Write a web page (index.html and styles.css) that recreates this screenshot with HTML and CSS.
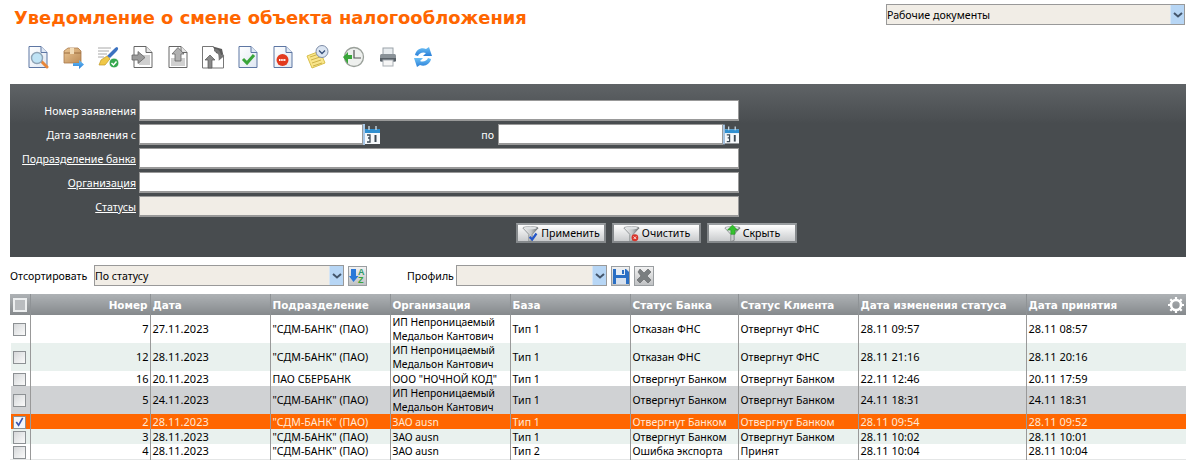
FILE: index.html
```html
<!DOCTYPE html>
<html lang="ru">
<head>
<meta charset="utf-8">
<title>Уведомление о смене объекта налогообложения</title>
<link rel="stylesheet" href="styles.css">
</head>
<body>
<svg class="defs" aria-hidden="true">
  <defs>
    <linearGradient id="gDoc" x1="0" y1="0" x2="1" y2="1"><stop offset="0" stop-color="#fff"/><stop offset="1" stop-color="#dfe7f2"/></linearGradient>
    <linearGradient id="gBlue" x1="0" y1="0" x2="0" y2="1"><stop offset="0" stop-color="#6cc0f5"/><stop offset="1" stop-color="#2a7fd8"/></linearGradient>
    <linearGradient id="gBox" x1="0" y1="0" x2="1" y2="1"><stop offset="0" stop-color="#ecc896"/><stop offset="1" stop-color="#bb8a55"/></linearGradient>
    <linearGradient id="gFunnel" x1="0" y1="0" x2="1" y2="0"><stop offset="0" stop-color="#f6f6f6"/><stop offset=".55" stop-color="#c4c7c9"/><stop offset="1" stop-color="#62676a"/></linearGradient>
    <symbol id="cal" viewBox="0 0 17 21">
      <rect x="0" y="0" width="2" height="21" fill="#a8c8e8"/>
      <rect x="2" y="5" width="15" height="15" fill="#f5f8fb"/>
      <rect x="2" y="5" width="15" height="4" fill="#2f8fd0"/>
      <path d="M6 2v4M13 2v4" stroke="#c4d4e0" stroke-width="1.400"/>
      <path d="M4 11h3v3H5m2 0v4H4" stroke="#3d4a55" stroke-width="1.300" fill="none"/>
      <path d="M12.500 11v7" stroke="#3d4a55" stroke-width="2" fill="none"/>
    </symbol>
    <symbol id="funnel" viewBox="0 0 20 20">
      <path d="M1 3.500C1 1.500 19 1.500 19 3.500L12 11V18L8 19.500V11Z" fill="url(#gFunnel)" stroke="#6f7477" stroke-width=".8"/>
      <ellipse cx="10" cy="3.500" rx="7.500" ry="1.600" fill="#dfe2e4"/>
    </symbol>
  </defs>
</svg>

<header class="top">
  <h1 class="title">Уведомление о смене объекта налогообложения</h1>
  <div class="select select-top"><span class="select-text">Рабочие документы</span><span class="select-arrow"><svg width="10" height="6" viewBox="0 0 10 6"><path d="M1 1l4 3.500L9 1" fill="none" stroke="#44566c" stroke-width="2"/></svg></span></div>
</header>

<nav class="toolbar">
  <span class="tool"><svg width="24" height="24" viewBox="0 0 24 24"><path d="M3 1.500H15L21 7.500V22.500H3Z" fill="url(#gDoc)" stroke="#5d76a3"/><path d="M15 1.500V7.500H21" fill="#dfe8f4" stroke="#5d76a3"/><path d="M15 16l6 6" stroke="#e8873a" stroke-width="3" stroke-linecap="round"/><circle cx="11" cy="13" r="5.500" fill="#bfe3f5" stroke="#8ea3b5" stroke-width="1.400"/></svg></span>
  <span class="tool"><svg width="24" height="24" viewBox="0 0 24 24"><path d="M3 6L7 3H17L20 6V18H3Z" fill="url(#gBox)" stroke="#a87a4c" stroke-width=".8"/><path d="M3 8H20" stroke="#9c6e40"/><rect x="9" y="3" width="4" height="6" fill="#f2dcb8"/><path d="M12 18h6v-3l5 4.500-5 4.500v-3h-6Z" fill="url(#gBlue)"/></svg></span>
  <span class="tool"><svg width="24" height="24" viewBox="0 0 24 24"><path d="M2 3h13M2 6h11M2 9h9M2 12h6" stroke="#a8a8a8"/><path d="M21 2c2 1 1 3-1 5l-6 6-3-2 6-6c2-2 3-3 4-3Z" fill="#3c72c0"/><path d="M11 11l3 3-5 6H3l2-5Z" fill="#f0c848" stroke="#c09a2a" stroke-width=".7"/><circle cx="18" cy="18" r="5" fill="#35a84e" stroke="#fff"/><path d="M15.500 18l2 2 3-3.500" stroke="#fff" stroke-width="1.500" fill="none"/></svg></span>
  <span class="tool"><svg width="24" height="24" viewBox="0 0 24 24"><path d="M3 1.500H15L21 7.500V22.500H3Z" fill="#fff" stroke="#666"/><path d="M15 1.500V7.500H21" fill="#e6e6e6" stroke="#666"/><rect x="8" y="10" width="11" height="10" fill="#d0d0d0"/><path d="M1 10H7V6.500L14 12.500 7 18.500V15H1Z" fill="#9b9b9b" stroke="#666" stroke-width=".8"/></svg></span>
  <span class="tool"><svg width="24" height="24" viewBox="0 0 24 24"><path d="M3 1.500H15L21 7.500V22.500H3Z" fill="#fff" stroke="#666"/><path d="M15 1.500V7.500H21" fill="#e6e6e6" stroke="#666"/><rect x="5" y="13" width="14" height="8" fill="#d0d0d0"/><path d="M12 2.500L18 9H15V16H9V9H6Z" fill="#b0b0b0" stroke="#666" stroke-width=".8"/></svg></span>
  <span class="tool"><svg width="24" height="24" viewBox="0 0 24 24"><path d="M1.500 1.500H12L22.500 11V23H1.500Z" fill="#fff" stroke="#777"/><path d="M12 1.500L21 4 22.500 11 15 8Z" fill="#5c5c5c"/><path d="M13 5C17 5 19 8 19 13L22.500 10" fill="none" stroke="#777" stroke-width="2.600"/><path d="M4 15L9 10 14 15H11V23H7V15Z" fill="#8a8a8a" stroke="#555" stroke-width=".7"/></svg></span>
  <span class="tool"><svg width="24" height="24" viewBox="0 0 24 24"><path d="M3 1.500H15L21 7.500V22.500H3Z" fill="url(#gDoc)" stroke="#5d76a3"/><path d="M15 1.500V7.500H21" fill="#dfe8f4" stroke="#5d76a3"/><path d="M7 14l4 4 7-8" fill="none" stroke="#3aa53a" stroke-width="3"/></svg></span>
  <span class="tool"><svg width="24" height="24" viewBox="0 0 24 24"><path d="M3 1.500H15L21 7.500V22.500H3Z" fill="url(#gDoc)" stroke="#5d76a3"/><path d="M15 1.500V7.500H21" fill="#dfe8f4" stroke="#5d76a3"/><circle cx="11.500" cy="15" r="6" fill="#e23a1e"/><path d="M8 15h7" stroke="#fff" stroke-width="2" stroke-dasharray="1.500 .7"/></svg></span>
  <span class="tool"><svg width="24" height="24" viewBox="0 0 24 24"><path d="M1 11L14 6 19 18 6 23Z" fill="#f9e58a" stroke="#d9c04c"/><path d="M4 12l9-3M5 15l9-3M6 18l9-3M7 21l9-3" stroke="#cdb24a"/><circle cx="16" cy="6.500" r="6" fill="#dbe5f2" stroke="#7d8ca6"/><path d="M13 5.500l3 3 3-3" fill="none" stroke="#37507a" stroke-width="1.300"/></svg></span>
  <span class="tool"><svg width="24" height="24" viewBox="0 0 24 24"><circle cx="13" cy="12" r="9.500" fill="#eef0ee" stroke="#9aa09a" stroke-width="1.300"/><path d="M13 5V13H20" fill="none" stroke="#555" stroke-width="1.200"/><path d="M2 12L7 7V10H11V14H7V19Z" fill="#3aa53a"/></svg></span>
  <span class="tool"><svg width="24" height="24" viewBox="0 0 24 24"><rect x="7" y="3" width="10" height="7" fill="#e9edf0" stroke="#9aa2a8"/><rect x="4" y="9" width="16" height="8" rx="1.500" fill="#8a9298"/><rect x="4" y="13" width="16" height="3" fill="#596168"/><rect x="7" y="15" width="10" height="6" fill="#f6f6f6" stroke="#aab0b5"/></svg></span>
  <span class="tool"><svg width="24" height="24" viewBox="0 0 24 24"><path d="M4 10C5 5 10 2 15 4L18 2 21 11H12L15 8C12 6.500 8 8 7 11Z" fill="url(#gBlue)"/><path d="M20 14C19 19 14 22 9 20L6 22 3 13H12L9 16C12 17.500 16 16 17 13Z" fill="url(#gBlue)"/></svg></span>
</nav>

<form class="filter">
  <div class="frow"><label class="flabel">Номер заявления</label><input class="finput" type="text"></div>
  <div class="frow"><label class="flabel">Дата заявления с</label><input class="finput fdate" type="text"><svg class="cal" width="17" height="21"><use href="#cal"/></svg><label class="flabel-to">по</label><input class="finput fdate fdate-to" type="text"><svg class="cal cal-to" width="16" height="21"><use href="#cal"/></svg></div>
  <div class="frow"><a class="flabel flink">Подразделение банка</a><input class="finput" type="text"></div>
  <div class="frow"><a class="flabel flink">Организация</a><input class="finput" type="text"></div>
  <div class="frow"><a class="flabel flink">Статусы</a><input class="finput fdisabled" type="text" disabled></div>
  <div class="factions">
    <button class="btn btn-apply" type="button"><svg class="btn-ico" width="17" height="17" viewBox="0 0 20 20"><use href="#funnel"/><path d="M9 14l3 3 5-7" fill="none" stroke="#2456c8" stroke-width="2.600"/></svg>Применить</button>
    <button class="btn btn-clear" type="button"><svg class="btn-ico" width="17" height="17" viewBox="0 0 20 20"><use href="#funnel"/><circle cx="14" cy="15" r="4" fill="#d8342a"/><path d="M12.500 13.500l3 3m0-3l-3 3" stroke="#fff"/></svg>Очистить</button>
    <button class="btn btn-hide" type="button"><svg class="btn-ico" width="17" height="17" viewBox="0 0 20 20"><use href="#funnel"/><path d="M10 0l6 6h-3v5H8V6H4Z" fill="#35c22f" stroke="#1c8a1c" stroke-width=".6"/></svg>Скрыть</button>
  </div>
</form>

<section class="sortbar">
  <span class="sort-label">Отсортировать</span>
  <div class="select select-sort"><span class="select-text">По статусу</span><span class="select-arrow"><svg width="10" height="6" viewBox="0 0 10 6"><path d="M1 1l4 3.500L9 1" fill="none" stroke="#44566c" stroke-width="2"/></svg></span></div>
  <span class="sqbtn sort-az"><svg width="17" height="17" viewBox="0 0 17 17"><path d="M2 2h5v7h2.500L4.500 15 0 9h2Z" fill="#2a78d8"/><text x="9" y="8" class="az az-a">A</text><text x="9" y="16" class="az az-z">Z</text></svg></span>
  <span class="profile-label">Профиль</span>
  <div class="select select-profile"><span class="select-text"></span><span class="select-arrow"><svg width="10" height="6" viewBox="0 0 10 6"><path d="M1 1l4 3.500L9 1" fill="none" stroke="#44566c" stroke-width="2"/></svg></span></div>
  <span class="sqbtn save"><svg width="16" height="16" viewBox="0 0 16 16"><path d="M0 1h13l3 3v12H0Z" fill="#2a6fc4"/><rect x="3" y="1" width="9" height="6" fill="#e8eef5"/><rect x="3" y="10" width="10" height="6" fill="#d7e1ee"/><rect x="9" y="2" width="2" height="4" fill="#2a6fc4"/></svg></span>
  <span class="sqbtn del"><svg width="16" height="16" viewBox="0 0 16 16"><path d="M2 4l2-3 4 4 4-4 3 3-4 4 4 4-3 3-4-4-4 4-3-3 4-4Z" fill="#7a7e80" stroke="#5c6062" stroke-width=".6"/></svg></span>
</section>

<table class="grid">
  <colgroup><col class="c0"><col class="c1"><col class="c2"><col class="c3"><col class="c4"><col class="c5"><col class="c6"><col class="c7"><col class="c8"><col class="c9"></colgroup>
  <thead>
    <tr>
      <th class="cb-cell"><span class="cb cb-head"></span></th>
      <th class="num">Номер</th><th>Дата</th><th>Подразделение</th><th>Организация</th><th>База</th><th>Статус Банка</th><th>Статус Клиента</th><th>Дата изменения статуса</th>
      <th class="last-th"><span class="th-inner">Дата принятия<svg class="gear" width="16" height="16" viewBox="0 0 16 16"><circle cx="8" cy="8" r="5" fill="none" stroke="#fff" stroke-width="2.600"/><path d="M8 0v3M8 13v3M0 8h3M13 8h3M2.300 2.300l2.100 2.100M11.600 11.600l2.100 2.100M2.300 13.700l2.100-2.100M11.600 4.400l2.100-2.100" stroke="#fff" stroke-width="2.200"/></svg></span></th>
    </tr>
  </thead>
  <tbody>
    <tr class="tall"><td class="cb-cell"><span class="cb"></span></td><td class="num">7</td><td class="d">27.11.2023</td><td>"СДМ-БАНК" (ПАО)</td><td class="org">ИП Непроницаемый Медальон Кантович</td><td>Тип 1</td><td>Отказан ФНС</td><td>Отвергнут ФНС</td><td class="d">28.11 09:57</td><td class="d">28.11 08:57</td></tr>
    <tr class="tall alt"><td class="cb-cell"><span class="cb"></span></td><td class="num">12</td><td class="d">28.11.2023</td><td>"СДМ-БАНК" (ПАО)</td><td class="org">ИП Непроницаемый Медальон Кантович</td><td>Тип 1</td><td>Отказан ФНС</td><td>Отвергнут ФНС</td><td class="d">28.11 21:16</td><td class="d">28.11 20:16</td></tr>
    <tr><td class="cb-cell"><span class="cb"></span></td><td class="num">16</td><td class="d">20.11.2023</td><td>ПАО СБЕРБАНК</td><td class="org">ООО "НОЧНОЙ КОД"</td><td>Тип 1</td><td>Отвергнут Банком</td><td>Отвергнут Банком</td><td class="d">22.11 12:46</td><td class="d">20.11 17:59</td></tr>
    <tr class="tall hover"><td class="cb-cell"><span class="cb"></span></td><td class="num">5</td><td class="d">24.11.2023</td><td>"СДМ-БАНК" (ПАО)</td><td class="org">ИП Непроницаемый Медальон Кантович</td><td>Тип 1</td><td>Отвергнут Банком</td><td>Отвергнут Банком</td><td class="d">24.11 18:31</td><td class="d">24.11 18:31</td></tr>
    <tr class="selected"><td class="cb-cell"><span class="cb cb-checked"><svg width="12" height="12" viewBox="0 0 12 12"><path d="M2.500 6l2.500 3.500L9.500 1.500" fill="none" stroke="#3a55b0" stroke-width="1.800"/></svg></span></td><td class="num">2</td><td class="d">28.11.2023</td><td>"СДМ-БАНК" (ПАО)</td><td class="org">ЗАО ausn</td><td>Тип 1</td><td>Отвергнут Банком</td><td>Отвергнут Банком</td><td class="d">28.11 09:54</td><td class="d">28.11 09:52</td></tr>
    <tr class="alt"><td class="cb-cell"><span class="cb"></span></td><td class="num">3</td><td class="d">28.11.2023</td><td>"СДМ-БАНК" (ПАО)</td><td class="org">ЗАО ausn</td><td>Тип 1</td><td>Отвергнут Банком</td><td>Отвергнут Банком</td><td class="d">28.11 10:02</td><td class="d">28.11 10:01</td></tr>
    <tr><td class="cb-cell"><span class="cb"></span></td><td class="num">4</td><td class="d">28.11.2023</td><td>"СДМ-БАНК" (ПАО)</td><td class="org">ЗАО ausn</td><td>Тип 2</td><td>Ошибка экспорта</td><td>Принят</td><td class="d">28.11 10:04</td><td class="d">28.11 10:04</td></tr>
  </tbody>
</table>
</body>
</html>
```

FILE: styles.css
```css
* { box-sizing: border-box; }
html, body { margin: 0; padding: 0; }
body {
  width: 1186px;
  height: 460px;
  overflow: hidden;
  background: #fff;
  color: #000;
  font-family: "Noto Sans", "Liberation Sans", sans-serif;
  font-size: 10.6px;
}
.defs { display: block; width: 0; height: 0; }

/* header */
.top {
  display: flex;
  justify-content: space-between;
  align-items: flex-start;
  height: 38px;
  padding: 4px 1px 0 14px;
}
.title {
  margin: 2px 0 0;
  font-family: "DejaVu Sans", sans-serif;
  font-size: 17.9px;
  line-height: 24px;
  font-weight: bold;
  color: #ff6600;
  white-space: nowrap;
}

/* select look-alike */
.select {
  display: flex;
  height: 21px;
  border: 1px solid #999;
  background: #f1ede6;
}
.select-text { flex: 1; line-height: 21px; white-space: nowrap; }
.select-arrow {
  display: flex;
  align-items: center;
  justify-content: center;
  width: 14px;
  background: #b7d6f5;
  border-left: 1px solid #d5e5f5;
}
.select-top { width: 299px; }

/* toolbar */
.toolbar {
  display: flex;
  height: 46px;
  padding: 7px 0 0 20px;
}
.tool {
  display: flex;
  justify-content: center;
  width: 35px;
  height: 24px;
}

/* filter panel */
.filter {
  height: 173px;
  margin-left: 10px;
  padding-top: 16px;
  background: linear-gradient(#5f6366 0, #484c4f 40px, #484c4f 100%);
}
.frow {
  display: flex;
  align-items: center;
  height: 21px;
  margin-bottom: 3px;
}
.flabel {
  width: 126px;
  margin-right: 3px;
  text-align: right;
  color: #fff;
  white-space: nowrap;
}
.flink { text-decoration: underline; }
.finput {
  width: 600px;
  height: 21px;
  padding: 0 2px;
  border: 1px solid #999;
  border-width: 1px 1px 2px 1px;
  background: #fff;
  border-radius: 0;
  outline: none;
  font: inherit;
}
.fdate { width: 224px; }
.fdate-to { width: 225px; }
.cal { display: block; flex: none; }
.flabel-to {
  width: 114px;
  margin-right: 4px;
  text-align: right;
  color: #fff;
}
.fdisabled { background: #f1ede6; }

.factions {
  display: flex;
  gap: 6px;
  margin: 6px 0 0 506px;
}
.btn {
  display: flex;
  align-items: center;
  justify-content: center;
  height: 20px;
  padding: 0;
  border: 2px solid #85898c;
  border-top-color: #9a9ea1;
  background: linear-gradient(#ffffff, #c9cbcd);
  font: inherit;
  color: #000;
}
.btn-ico { flex: none; margin-right: 2px; }
.btn-apply { width: 90px; }
.btn-clear { width: 89px; }
.btn-hide { width: 90px; }

/* sort bar */
.sortbar {
  display: flex;
  align-items: center;
  height: 21px;
  margin: 8px 0 8px 10px;
}
.sort-label { width: 84px; white-space: nowrap; }
.select-sort { width: 250px; }
.sqbtn {
  display: flex;
  align-items: center;
  justify-content: center;
  width: 19px;
  height: 20px;
  background: linear-gradient(#f2f2f2, #c0c2c4);
  border: 1px solid #9a9ea1;
}
.sort-az { margin-left: 4px; }
.az { font-family: "Liberation Sans", sans-serif; font-size: 9px; font-weight: bold; }
.az-a { fill: #2f9a6a; }
.az-z { fill: #3aa53a; }
.profile-label { width: 49px; margin-left: 40px; white-space: nowrap; }
.select-profile { width: 151px; }
.save { margin-left: 4px; }
.del { margin-left: 4px; width: 20px; }

/* grid */
.grid {
  table-layout: fixed;
  width: 1176px;
  margin-left: 10px;
  border-collapse: collapse;
  border-spacing: 0;
  border-bottom: 1px solid #e4e6e6;
}
.c0 { width: 20px; }
.c1 { width: 120px; }
.c2 { width: 120px; }
.c3 { width: 120px; }
.c4 { width: 120px; }
.c5 { width: 120px; }
.c6 { width: 108px; }
.c7 { width: 120px; }
.c8 { width: 168px; }
.c9 { width: 160px; }

.grid th {
  height: 21px;
  padding: 0 2px;
  border-left: 1px solid #8f9396;
  background: linear-gradient(#aeb2b5, #85898c);
  color: #fff;
  font-family: "DejaVu Sans", sans-serif;
  font-size: 10.4px;
  font-weight: bold;
  text-align: left;
  white-space: nowrap;
}
.grid th:first-child { border-left: 0; }
.grid td {
  height: 15px;
  padding: 0 0 0 2px;
  border-left: 1px solid #999;
  line-height: 14px;
  overflow: hidden;
  vertical-align: middle;
}
.grid .tall td { height: 28px; }
.grid td:first-child { border-left: 0; box-shadow: inset 1px 0 #fff; }
.grid .num { text-align: right; padding: 0 1px 0 0; font-size: 11px; }
.grid th.num { padding-right: 2px; font-size: 10.4px; }
.grid .d { font-size: 11px; }
.grid .org { font-size: 10.3px; }
.grid .cb-cell { padding: 0; text-align: center; }
.alt td { background: #e9f1ee; }
.hover td { background: #d0d2d4; }
.selected td { background: #ff6600; color: #ffe9d6; }

.cb {
  display: inline-flex;
  align-items: center;
  justify-content: center;
  vertical-align: middle;
  width: 13px;
  height: 13px;
  border: 1px solid #8d9194;
  background: linear-gradient(135deg, #d6d8da, #fafafa);
}
.cb-head { border: 2px solid #eceeef; background: #b9bcbf; width: 14px; height: 14px; }
.cb-checked { background: #f4f6fa; }

.th-inner { display: flex; align-items: center; justify-content: space-between; }
.gear { flex: none; }
```
